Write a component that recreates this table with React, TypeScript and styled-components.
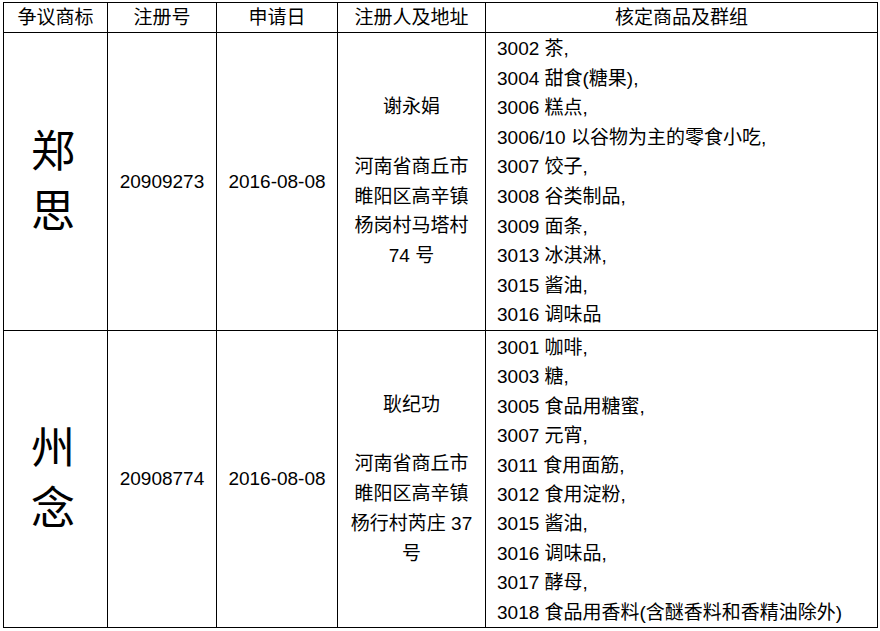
import styled, { createGlobalStyle } from "styled-components";

const GlobalStyle = createGlobalStyle`
  html, body {
    margin: 0;
    background: #ffffff;
  }
  body {
    padding: 2px 0 0 3px;
    font-family: "Liberation Sans", "Noto Sans CJK SC", sans-serif;
    color: #000000;
  }
`;

const Table = styled.table`
  border-collapse: collapse;
  table-layout: fixed;
  width: 874px;
  font-size: 19px;
`;

const HeadRow = styled.tr`
  height: 30px;
`;

const BodyRow = styled.tr<{ $height: number }>`
  height: ${(p) => p.$height}px;
`;

const HeadCell = styled.th`
  border: 1px solid #000000;
  padding: 0;
  font-weight: normal;
  text-align: center;
  vertical-align: middle;
  line-height: 28px;
`;

const Cell = styled.td`
  border: 1px solid #000000;
  padding: 0;
  text-align: center;
  vertical-align: middle;
  line-height: 29.7px;
  white-space: nowrap;
`;

const MarkCell = styled(Cell)`
  font-size: 44px;
  line-height: 60px;
  padding-right: 5px;
`;

const OwnerCell = styled(Cell)`
  line-height: 29.8px;
`;

const GoodsCell = styled(Cell)<{ $top: number }>`
  text-align: left;
  vertical-align: top;
  padding: ${(p) => p.$top}px 0 0 11px;
`;

const Line = styled.div<{ $h: number }>`
  height: ${(p) => p.$h}px;
`;

type Entry = {
  mark: [string, string];
  number: string;
  date: string;
  owner: string;
  address: string[];
  goods: string[];
  height: number;
  top: number;
  lineHeight: number;
};

const entries: Entry[] = [
  {
    mark: ["郑", "思"],
    number: "20909273",
    date: "2016-08-08",
    owner: "谢永娟",
    address: ["河南省商丘市", "睢阳区高辛镇", "杨岗村马塔村", "74 号"],
    goods: [
      "3002 茶,",
      "3004 甜食(糖果),",
      "3006 糕点,",
      "3006/10 以谷物为主的零食小吃,",
      "3007 饺子,",
      "3008 谷类制品,",
      "3009 面条,",
      "3013 冰淇淋,",
      "3015 酱油,",
      "3016 调味品",
    ],
    height: 298,
    top: 1,
    lineHeight: 29.6,
  },
  {
    mark: ["州", "念"],
    number: "20908774",
    date: "2016-08-08",
    owner: "耿纪功",
    address: ["河南省商丘市", "睢阳区高辛镇", "杨行村芮庄 37", "号"],
    goods: [
      "3001 咖啡,",
      "3003 糖,",
      "3005 食品用糖蜜,",
      "3007 元宵,",
      "3011 食用面筋,",
      "3012 食用淀粉,",
      "3015 酱油,",
      "3016 调味品,",
      "3017 酵母,",
      "3018 食品用香料(含醚香料和香精油除外)",
    ],
    height: 296,
    top: 2,
    lineHeight: 29.4,
  },
];

export default function App() {
  return (
    <>
      <GlobalStyle />
      <Table>
        <colgroup>
          <col style={{ width: 104 }} />
          <col style={{ width: 109 }} />
          <col style={{ width: 121 }} />
          <col style={{ width: 148 }} />
          <col style={{ width: 392 }} />
        </colgroup>
        <thead>
          <HeadRow>
            <HeadCell>争议商标</HeadCell>
            <HeadCell>注册号</HeadCell>
            <HeadCell>申请日</HeadCell>
            <HeadCell>注册人及地址</HeadCell>
            <HeadCell>核定商品及群组</HeadCell>
          </HeadRow>
        </thead>
        <tbody>
          {entries.map((e) => (
            <BodyRow key={e.number} $height={e.height}>
              <MarkCell>
                {e.mark[0]}
                <br />
                {e.mark[1]}
              </MarkCell>
              <Cell>{e.number}</Cell>
              <Cell>{e.date}</Cell>
              <OwnerCell>
                {e.owner}
                <br />
                <br />
                {e.address.map((a, i) => (
                  <span key={i}>
                    {a}
                    {i < e.address.length - 1 && <br />}
                  </span>
                ))}
              </OwnerCell>
              <GoodsCell $top={e.top}>
                {e.goods.map((g) => (
                  <Line key={g} $h={e.lineHeight}>
                    {g}
                  </Line>
                ))}
              </GoodsCell>
            </BodyRow>
          ))}
        </tbody>
      </Table>
    </>
  );
}
